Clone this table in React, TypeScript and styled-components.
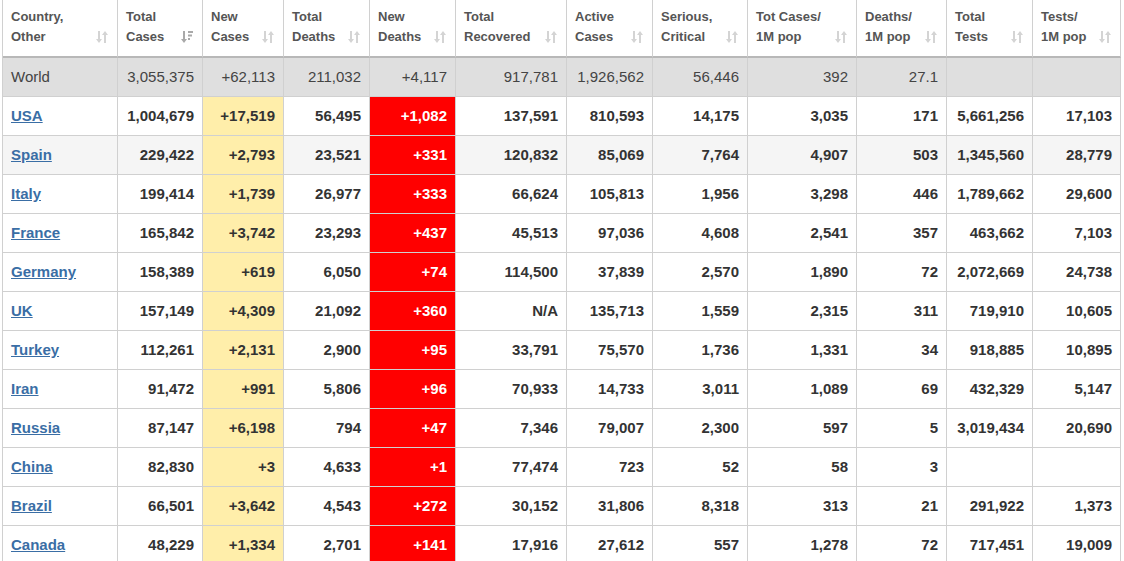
import React from "react";
import styled, { createGlobalStyle } from "styled-components";

const Global = createGlobalStyle`
  html, body { margin: 0; padding: 0; background: #fff; }
  body { font-family: "Liberation Sans", Arial, sans-serif; }
`;

const Wrap = styled.div`
  padding: 0 2px;
`;

const Table = styled.table`
  border-collapse: separate;
  border-spacing: 0;
  table-layout: fixed;
  width: 1119px;
  border-left: 1px solid #d0d0d0;
  font-family: "Liberation Sans", Arial, sans-serif;
`;

const Th = styled.th<{ $w: number }>`
  position: relative;
  box-sizing: border-box;
  width: ${(p) => p.$w}px;
  height: 58px;
  padding: 7px 8px 9px 8px;
  text-align: left;
  vertical-align: top;
  font-size: 13px;
  line-height: 20px;
  font-weight: bold;
  color: #555;
  border-right: 1px solid #d0d0d0;
  border-bottom: 2px solid #b8b8b8;
  white-space: nowrap;
`;

const SortIcon = styled.span`
  position: absolute;
  right: 9px;
  bottom: 12px;
  width: 12px;
  height: 14px;
  display: block;
`;

const Tr = styled.tr<{ $bg?: string }>`
  background: ${(p) => p.$bg || "#fff"};
`;

type Kind = "plain" | "new" | "death";

const Td = styled.td<{ $kind?: Kind; $world?: boolean }>`
  box-sizing: border-box;
  height: 39px;
  padding: 8px 8px;
  font-size: 15px;
  line-height: 22px;
  text-align: right;
  white-space: nowrap;
  border-right: 1px solid #d0d0d0;
  border-bottom: 1px solid #d0d0d0;
  font-weight: ${(p) => (p.$world ? "normal" : "bold")};
  color: ${(p) =>
    p.$world ? "#444" : p.$kind === "death" ? "#fff" : "#333"};
  background: ${(p) =>
    p.$world
      ? "transparent"
      : p.$kind === "new"
      ? "#ffeeaa"
      : p.$kind === "death"
      ? "#ff0000"
      : "transparent"};
`;

const NameTd = styled(Td)`
  text-align: left;
`;

const CountryLink = styled.a`
  color: #3a6ea5;
  text-decoration: underline;
  font-weight: bold;
`;

const BothIcon = () => (
  <svg width="12" height="14" viewBox="0 0 12 14">
    <g fill="#d4d4d4" stroke="none">
      <rect x="2" y="1" width="2" height="9" />
      <polygon points="0,9 6,9 3,13" />
      <rect x="8" y="4" width="2" height="9" />
      <polygon points="6,5 12,5 9,1" />
    </g>
  </svg>
);

const DescIcon = () => (
  <svg width="12" height="14" viewBox="0 0 12 14">
    <g fill="#a9a9a9" stroke="none">
      <rect x="2" y="1" width="2" height="9" />
      <polygon points="0,9 6,9 3,13" />
      <rect x="7" y="1" width="5" height="2" />
      <rect x="7" y="4.5" width="4" height="2" />
      <rect x="7" y="8" width="2" height="2" />
    </g>
  </svg>
);

const headers: { l: [string, string]; w: number }[] = [
  { l: ["Country,", "Other"], w: 115 },
  { l: ["Total", "Cases"], w: 85 },
  { l: ["New", "Cases"], w: 81 },
  { l: ["Total", "Deaths"], w: 86 },
  { l: ["New", "Deaths"], w: 86 },
  { l: ["Total", "Recovered"], w: 111 },
  { l: ["Active", "Cases"], w: 86 },
  { l: ["Serious,", "Critical"], w: 95 },
  { l: ["Tot Cases/", "1M pop"], w: 109 },
  { l: ["Deaths/", "1M pop"], w: 90 },
  { l: ["Total", "Tests"], w: 86 },
  { l: ["Tests/", "1M pop"], w: 88 },
];

const world = [
  "World", "3,055,375", "+62,113", "211,032", "+4,117", "917,781",
  "1,926,562", "56,446", "392", "27.1", "", "",
];

const rows: string[][] = [
  ["USA", "1,004,679", "+17,519", "56,495", "+1,082", "137,591", "810,593", "14,175", "3,035", "171", "5,661,256", "17,103"],
  ["Spain", "229,422", "+2,793", "23,521", "+331", "120,832", "85,069", "7,764", "4,907", "503", "1,345,560", "28,779"],
  ["Italy", "199,414", "+1,739", "26,977", "+333", "66,624", "105,813", "1,956", "3,298", "446", "1,789,662", "29,600"],
  ["France", "165,842", "+3,742", "23,293", "+437", "45,513", "97,036", "4,608", "2,541", "357", "463,662", "7,103"],
  ["Germany", "158,389", "+619", "6,050", "+74", "114,500", "37,839", "2,570", "1,890", "72", "2,072,669", "24,738"],
  ["UK", "157,149", "+4,309", "21,092", "+360", "N/A", "135,713", "1,559", "2,315", "311", "719,910", "10,605"],
  ["Turkey", "112,261", "+2,131", "2,900", "+95", "33,791", "75,570", "1,736", "1,331", "34", "918,885", "10,895"],
  ["Iran", "91,472", "+991", "5,806", "+96", "70,933", "14,733", "3,011", "1,089", "69", "432,329", "5,147"],
  ["Russia", "87,147", "+6,198", "794", "+47", "7,346", "79,007", "2,300", "597", "5", "3,019,434", "20,690"],
  ["China", "82,830", "+3", "4,633", "+1", "77,474", "723", "52", "58", "3", "", ""],
  ["Brazil", "66,501", "+3,642", "4,543", "+272", "30,152", "31,806", "8,318", "313", "21", "291,922", "1,373"],
  ["Canada", "48,229", "+1,334", "2,701", "+141", "17,916", "27,612", "557", "1,278", "72", "717,451", "19,009"],
];

const kindOf = (i: number): Kind => (i === 2 ? "new" : i === 4 ? "death" : "plain");

export default function App() {
  return (
    <>
      <Global />
      <Wrap>
        <Table>
          <thead>
            <tr>
              {headers.map((h, i) => (
                <Th key={i} $w={h.w}>
                  {h.l[0]}
                  <br />
                  {h.l[1]}
                  <SortIcon>{i === 1 ? <DescIcon /> : <BothIcon />}</SortIcon>
                </Th>
              ))}
            </tr>
          </thead>
          <tbody>
            <Tr $bg="#dfdfdf">
              {world.map((v, i) =>
                i === 0 ? (
                  <NameTd key={i} $world>
                    {v}
                  </NameTd>
                ) : (
                  <Td key={i} $world>
                    {v}
                  </Td>
                )
              )}
            </Tr>
            {rows.map((r) => (
              <Tr key={r[0]} $bg={r[0] === "Spain" ? "#f5f5f5" : undefined}>
                {r.map((v, i) =>
                  i === 0 ? (
                    <NameTd key={i}>
                      <CountryLink href="#">{v}</CountryLink>
                    </NameTd>
                  ) : (
                    <Td key={i} $kind={kindOf(i)}>
                      {v}
                    </Td>
                  )
                )}
              </Tr>
            ))}
          </tbody>
        </Table>
      </Wrap>
    </>
  );
}
